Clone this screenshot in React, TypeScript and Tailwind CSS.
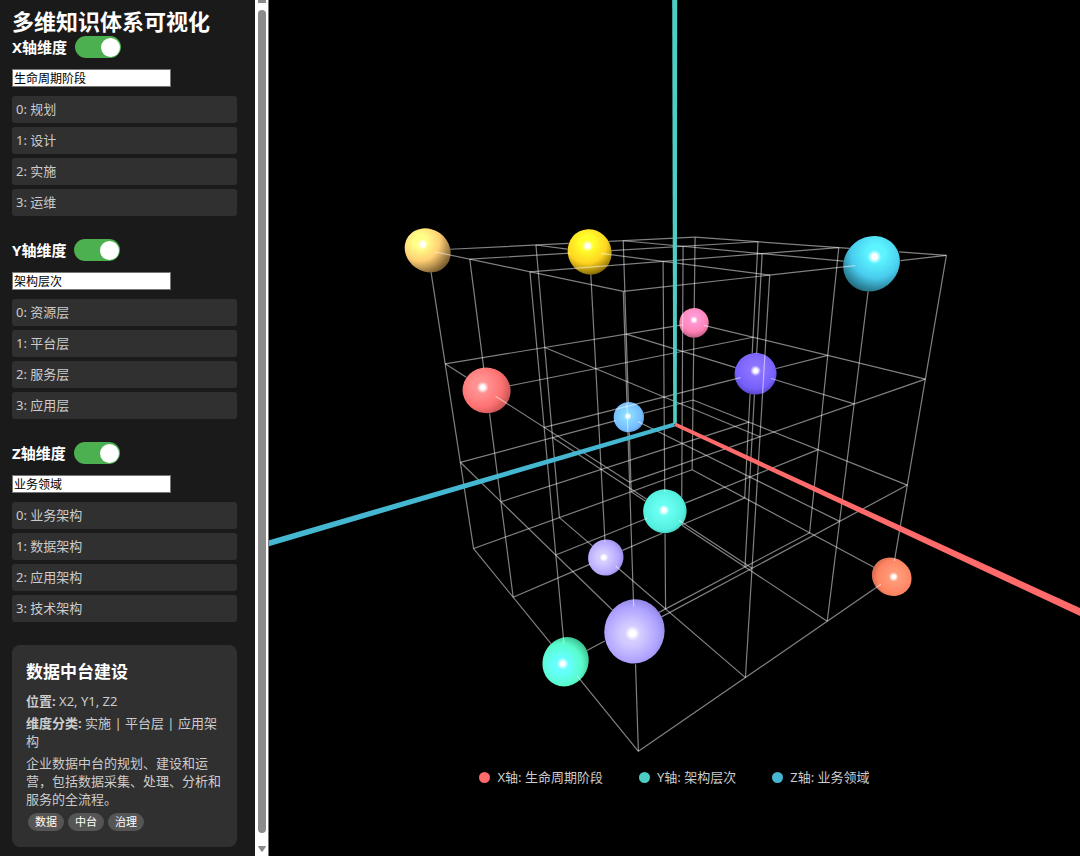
import { useState } from "react"

type Vec = [number, number, number]

const dimensions = [
  { axis: "X", name: "生命周期阶段", dot: "bg-[#ff6b6b]", values: ["规划", "设计", "实施", "运维"] },
  { axis: "Y", name: "架构层次", dot: "bg-[#4ecdc4]", values: ["资源层", "平台层", "服务层", "应用层"] },
  { axis: "Z", name: "业务领域", dot: "bg-[#45b7d1]", values: ["业务架构", "数据架构", "应用架构", "技术架构"] },
]

const tags = ["数据", "中台", "治理"]

// at: grid cell, colors: lit / base / shade, shine: highlight offset in px
const nodes: { at: Vec; colors: [string, string, string]; shine: [number, number] }[] = [
  { at: [0, 3, 3], colors: ["#ffff88", "#ffcf74", "#7d6132"], shine: [-5, -6] },
  { at: [1, 3, 2], colors: ["#ffff2c", "#ffd420", "#6b5500"], shine: [-2, -6] },
  { at: [3, 3, 1], colors: ["#5cf4ff", "#48ccee", "#1c5a6a"], shine: [3, -7] },
  { at: [0, 2, 0], colors: ["#ff9ad4", "#ff80b4", "#8c4462"], shine: [0, -3] },
  { at: [2, 2, 1], colors: ["#8c72ff", "#7660fc", "#33298c"], shine: [0, -3] },
  { at: [1, 2, 3], colors: ["#ff9292", "#ff7272", "#a84444"], shine: [-4, -3] },
  { at: [0, 1, 1], colors: ["#88d8ff", "#74bcff", "#3f70a8"], shine: [-1, -1] },
  { at: [2, 1, 2], colors: ["#68fff2", "#54efdf", "#227c74"], shine: [-1, -1] },
  { at: [1, 0, 2], colors: ["#d4ccff", "#b4a6ff", "#6e60b8"], shine: [-2, 0] },
  { at: [3, 0, 0], colors: ["#ff9a78", "#ff8462", "#a04a34"], shine: [2, 0] },
  { at: [3, 1, 3], colors: ["#d4ccff", "#aca0ff", "#6a5ebc"], shine: [-2, 2] },
  { at: [2, 0, 3], colors: ["#66ffff", "#58fccb", "#2a9064"], shine: [-3, 2] },
]

const VIEW = { width: 811, height: 856, cx: 405.5, cy: 424 }
const FOCAL = 565
const DISTANCE = 5.154
const RADIUS = 0.18
const THETA = 0.8985
const PHI = 0.3765

// world -> camera space, cube centre sits at the origin
const toCamera = ([i, j, k]: Vec): Vec => {
  const [x, y, z] = [i - 1.5, j - 1.5, k - 1.5]
  const [st, ct, sp, cp] = [Math.sin(THETA), Math.cos(THETA), Math.sin(PHI), Math.cos(PHI)]
  return [
    x * ct - z * st,
    -x * st * sp + y * cp - z * ct * sp,
    DISTANCE - (x * st * cp + y * sp + z * ct * cp),
  ]
}

const toScreen = ([x, y, d]: Vec) => [VIEW.cx + (FOCAL * x) / d, VIEW.cy - (FOCAL * y) / d]

const dot = (a: Vec, b: Vec) => a[0] * b[0] + a[1] * b[1] + a[2] * b[2]

const centers = nodes.map((n) => toCamera(n.at))

const isHidden = (p: Vec) =>
  centers.some((c) => {
    const a = dot(p, p)
    const b = dot(p, c)
    const disc = b * b - a * (dot(c, c) - RADIUS * RADIUS)
    return disc > 0 && (b - Math.sqrt(disc)) / a < 1
  })

// splits one grid line into the runs that no sphere covers
const visibleRuns = (from: Vec, to: Vec) => {
  const steps = 900
  let path = ""
  let run: string[] = []
  const flush = () => {
    if (run.length > 1) path += `M${run[0]}L${run[run.length - 1]}`
    run = []
  }
  for (let s = 0; s <= steps; s++) {
    const t = s / steps
    const p = toCamera([
      from[0] + (to[0] - from[0]) * t,
      from[1] + (to[1] - from[1]) * t,
      from[2] + (to[2] - from[2]) * t,
    ])
    if (isHidden(p)) {
      flush()
    } else {
      const [x, y] = toScreen(p)
      run.push(`${x.toFixed(2)} ${y.toFixed(2)}`)
    }
  }
  flush()
  return path
}

const gridPaths: string[] = []
for (let a = 0; a < 4; a++) {
  for (let b = 0; b < 4; b++) {
    gridPaths.push(visibleRuns([0, a, b], [3, a, b]))
    gridPaths.push(visibleRuns([a, 0, b], [a, 3, b]))
    gridPaths.push(visibleRuns([a, b, 0], [a, b, 3]))
  }
}

const spheres = nodes
  .map((node, index) => {
    const [x, y, d] = centers[index]
    const [cx, cy] = toScreen(centers[index])
    const minor = (FOCAL * RADIUS) / d
    return {
      ...node,
      id: `node-${index}`,
      d,
      cx,
      cy,
      minor,
      major: (minor * Math.hypot(x, y, d)) / d,
      angle: (Math.atan2(-y, x) * 180) / Math.PI,
    }
  })
  .sort((a, b) => b.d - a.d)

const Scene = () => {
  return (
    <svg
      className="block h-full w-full"
      viewBox={`0 0 ${VIEW.width} ${VIEW.height}`}
      preserveAspectRatio="xMidYMid slice"
      role="img"
      aria-label="多维知识体系可视化"
    >
      <defs>
        <radialGradient id="shine">
          <stop offset="0.35" stopColor="#fff" />
          <stop offset="1" stopColor="#fff" stopOpacity="0" />
        </radialGradient>
        {spheres.map((s) => (
          <radialGradient
            key={s.id}
            id={s.id}
            gradientUnits="userSpaceOnUse"
            cx={s.cx + s.shine[0] * 1.5}
            cy={s.cy + s.shine[1] * 1.5}
            r={s.minor * 1.6}
          >
            <stop offset="0" stopColor={s.colors[0]} />
            <stop offset="0.2" stopColor={s.colors[0]} />
            <stop offset="0.58" stopColor={s.colors[1]} />
            <stop offset="1" stopColor={s.colors[2]} />
          </radialGradient>
        ))}
      </defs>

      {spheres.map((s) => (
        <g key={s.id}>
          <clipPath id={`${s.id}-clip`}>
            <ellipse
              cx={s.cx}
              cy={s.cy}
              rx={s.major}
              ry={s.minor}
              transform={`rotate(${s.angle} ${s.cx} ${s.cy})`}
            />
          </clipPath>
          <rect
            x={s.cx - 40}
            y={s.cy - 40}
            width="80"
            height="80"
            fill={`url(#${s.id})`}
            clipPath={`url(#${s.id}-clip)`}
          />
          <circle cx={s.cx + s.shine[0]} cy={s.cy + s.shine[1]} r={s.minor * 0.26} fill="url(#shine)" />
        </g>
      ))}

      <g fill="none" stroke="#fff" strokeOpacity="0.5" strokeWidth="1.2">
        {gridPaths.map((d, index) => (
          <path key={index} d={d} />
        ))}
      </g>

      <polygon points="404.2,424 403.2,0 408.2,0 407.8,424" fill="#4ecdc4" />
      <polygon points="405,422.5 -1,540.5 -1,546.5 406,426.5" fill="#45b7d1" />
      <polygon points="406.5,422.5 812,608.5 812,616.5 405.5,426" fill="#ff6b6b" />
    </svg>
  )
}

const DimensionPanel = ({ axis, name, values }: { axis: string; name: string; values: string[] }) => {
  const [label, setLabel] = useState(name)

  return (
    <section className="mb-[23px]">
      <div className="flex h-[22px] items-center gap-2">
        <label htmlFor={`toggle-${axis}`} className="text-[15px] font-bold text-white">
          {axis}轴维度
        </label>
        <input
          id={`toggle-${axis}`}
          type="checkbox"
          defaultChecked
          className="flex h-[22px] w-[46px] appearance-none items-center rounded-full bg-[#666] px-px before:size-[19px] before:rounded-full before:bg-white checked:justify-end checked:bg-[#4caf50]"
        />
      </div>
      <input
        type="text"
        aria-label={`${axis}轴名称`}
        value={label}
        onChange={(e) => setLabel(e.target.value)}
        className="mt-[11px] block h-[18px] w-[159px] border border-[#767676] bg-white px-px text-[12px] leading-4 text-black"
      />
      <ul className="mt-[9px] flex flex-col gap-1">
        {values.map((value, index) => (
          <li key={value} className="h-[27px] rounded-[3px] bg-[#303030] px-1 text-[13px] leading-[27px] text-[#ccc]">
            {index}: {value}
          </li>
        ))}
      </ul>
    </section>
  )
}

const NodeCard = () => {
  return (
    <article className="rounded-lg bg-[#303030] px-[14px] pt-[14px] pb-4 text-[13px] leading-[18px] text-[#ccc]">
      <h2 className="text-[17px] leading-[26px] font-bold text-white">数据中台建设</h2>
      <p className="mt-[7px]">
        <strong>位置:</strong> X2, Y1, Z2
      </p>
      <p className="mt-1">
        <strong>维度分类:</strong> 实施 | 平台层 | 应用架构
      </p>
      <p className="mt-1">企业数据中台的规划、建设和运营，包括数据采集、处理、分析和服务的全流程。</p>
      <div className="mt-[5px] flex gap-1 px-0.5">
        {tags.map((tag) => (
          <span key={tag} className="rounded-full bg-[#555] px-[7px] text-[11px] text-white">
            {tag}
          </span>
        ))}
      </div>
    </article>
  )
}

const ScrollTrack = () => {
  return (
    <div className="flex w-[14px] shrink-0 flex-col items-center border-r border-[#777] bg-white" aria-hidden="true">
      <div className="h-[3px] w-2 bg-[#8b8b8b]" />
      <div className="mt-[7px] w-2 flex-1 rounded-full bg-[#8b8b8b]" />
      <svg className="mt-[13px] mb-1 h-[6px] w-2" viewBox="0 0 8 6">
        <path d="M0.5 0h7q.8 0 .2 1L4.6 5.5q-.6.7-1.2 0L.3 1q-.6-1 .2-1z" fill="#8b8b8b" />
      </svg>
    </div>
  )
}

const App = () => {
  return (
    <div className="flex h-screen overflow-hidden bg-black font-['Noto_Sans','Noto_Sans_CJK_SC',sans-serif]">
      <aside className="flex w-[269px] shrink-0 bg-[#1a1a1a]">
        <div className="min-w-0 flex-1 overflow-hidden pt-2 pr-[18px] pl-3">
          <h1 className="mb-0.5 text-[22px] leading-[26px] font-bold whitespace-nowrap text-white">
            多维知识体系可视化
          </h1>
          {dimensions.map((d) => (
            <DimensionPanel key={d.axis} axis={d.axis} name={d.name} values={d.values} />
          ))}
          <NodeCard />
        </div>
        <ScrollTrack />
      </aside>

      <main className="relative min-w-0 flex-1">
        <Scene />
        <div className="absolute inset-x-0 bottom-[69px] flex justify-center gap-9 text-[13px] leading-5 text-[#ccc]">
          {dimensions.map((d) => (
            <div key={d.axis} className="flex items-center gap-[7px]">
              <span className={`size-[11px] rounded-full ${d.dot}`} />
              {d.axis}轴: {d.name}
            </div>
          ))}
        </div>
      </main>
    </div>
  )
}

export default App
